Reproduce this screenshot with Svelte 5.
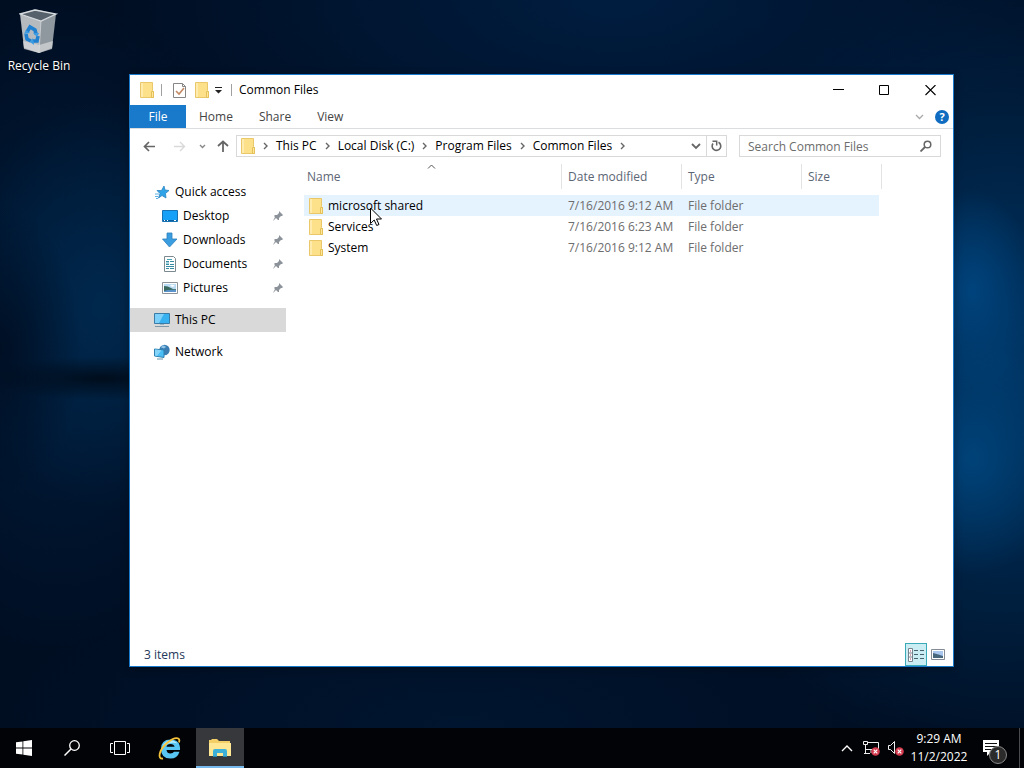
<script lang="ts">
	type Row = { name: string; modified: string; type: string };

	const tabs = ['Home', 'Share', 'View'];
	const crumbs = ['This PC', 'Local Disk (C:)', 'Program Files', 'Common Files'];
	const pinned = ['Desktop', 'Downloads', 'Documents', 'Pictures'];

	const rows: Row[] = [
		{ name: 'microsoft shared', modified: '7/16/2016 9:12 AM', type: 'File folder' },
		{ name: 'Services', modified: '7/16/2016 6:23 AM', type: 'File folder' },
		{ name: 'System', modified: '7/16/2016 9:12 AM', type: 'File folder' }
	];

	let hovered = $state('microsoft shared');
	let search = $state('');
</script>

{#snippet folder()}
	<svg class="folder" width="14" height="16" viewBox="0 0 14 16" aria-hidden="true">
		<path d="M.5.5h12v8l1 1v6H.5z" fill="#fde08a" stroke="#eac768" />
		<path d="M1 1h2v14H1z" fill="#ffebae" />
		<path d="M11.500 9.500v6h2v-6z" fill="#ffe89c" stroke="#e5bf58" />
	</svg>
{/snippet}

{#snippet chevron()}
	<svg class="chevron" width="5" height="8" viewBox="0 0 5 8" aria-hidden="true">
		<path d="M1 1l3 3-3 3" fill="none" stroke="#666" stroke-width="1.400" />
	</svg>
{/snippet}

{#snippet picture()}
	<path d="M.5 2.500h15v11H.5z" fill="#fff" stroke="#8b9298" />
	<path d="M2 4h12v8H2z" fill="#b9dbf4" />
	<path d="M2 6q4 0 7 2t5 1v3H2z" fill="#39695f" />
	<path d="M2 11q6-2 12-1v2H2z" fill="#5b93cc" />
	<path d="M8 5q3-1 5 1l-3 1z" fill="#fff" />
{/snippet}

{#snippet monitor()}
	<path d="M.5 1.500h15v10H.5z" fill="#37b1f0" stroke="#3a7ca5" />
	<path d="M1 2h9L5 11H1z" fill="#7cd0fa" />
	<path d="M6 12h4v1H6z" fill="#9bb4c4" />
	<path d="M1 14.500h14" stroke="#7f98a8" />
{/snippet}

<div class="screen">
	<main class="desktop">
		<button class="shortcut">
			<svg width="40" height="46" viewBox="0 0 40 46" aria-hidden="true">
				<path d="M1 5L16 0l21 5-15 7z" fill="#57616b" />
				<path d="M1 5l21 7v31l-2 1L5 39z" fill="#b5babf" />
				<path d="M22 12l15-7-4 34-13 5z" fill="#8f989f" />
				<path d="M4 32l16 4 14-4-1 8-13 4-15-4z" fill="#d9dadb" opacity=".7" />
				<path d="M1 5L16 1l21 4-15 7z" fill="none" stroke="#d6dbdf" stroke-width="1.300" />
				<path d="M22 12l-2 32" stroke="#dfe2e4" opacity=".6" />
				<g fill="none" stroke="#2080d0" stroke-width="3.600">
					<path d="M8 23l3-5 5 3 1 4" />
					<path d="M7 25l1 5 4 2" />
					<path d="M13 32l5 0 1-5" />
				</g>
				<path d="M14 24l6 0-2 4zM5 25l6-1-4-3zM14 29l-3 4 4 3z" fill="#3b9ce4" />
			</svg>
			<span>Recycle Bin</span>
		</button>

		<section class="window" aria-label="Common Files">
			<header class="titlebar">
				{@render folder()}
				<span class="divider"></span>
				<button class="quick" aria-label="Properties">
					<svg width="14" height="16" viewBox="0 0 14 16">
						<path d="M.5 1.500h9l3 3v11H.5z" fill="#fff" stroke="#868686" />
						<path d="M9.500 1.500v3h3" fill="none" stroke="#868686" />
						<path d="M3 9l3 3 5-6" fill="none" stroke="#c48a63" stroke-width="1.600" />
					</svg>
				</button>
				<button class="quick" aria-label="New folder">{@render folder()}</button>
				<button class="customize" aria-label="Customize Quick Access Toolbar">
					<svg width="7" height="7" viewBox="0 0 7 7">
						<path d="M0 0h7v1H0zM0 3h7L3.500 6.500z" fill="#222" />
					</svg>
				</button>
				<span class="divider"></span>
				<h1>Common Files</h1>
				<div class="controls">
					<button aria-label="Minimize">
						<svg width="11" height="11" viewBox="0 0 11 11"><path d="M0 4.500h11" stroke="#000" /></svg>
					</button>
					<button aria-label="Maximize">
						<svg width="11" height="11" viewBox="0 0 11 11"><path d="M.5.5h9v9h-9z" fill="none" stroke="#000" /></svg>
					</button>
					<button aria-label="Close">
						<svg width="11" height="11" viewBox="0 0 11 11"><path d="M.5 0l10 10m0-10l-10 10" stroke="#000" stroke-width="1.100" /></svg>
					</button>
				</div>
			</header>

			<nav class="ribbon" aria-label="Ribbon">
				<button class="file">File</button>
				{#each tabs as tab}
					<button class="tab">{tab}</button>
				{/each}
				<button class="expand" aria-label="Expand the Ribbon">
					<svg width="9" height="6" viewBox="0 0 9 6"><path d="M1 1l3.500 3.500L8 1" fill="none" stroke="#a9a9a9" stroke-width="1.300" /></svg>
				</button>
				<button class="help" aria-label="Help">?</button>
			</nav>

			<div class="navbar">
				<button class="arrow" aria-label="Back">
					<svg width="13" height="11" viewBox="0 0 13 11"><path d="M6 1L1.500 5.500 6 10M2 5.500h10" fill="none" stroke="#666" stroke-width="1.700" /></svg>
				</button>
				<button class="arrow" aria-label="Forward" disabled>
					<svg width="13" height="11" viewBox="0 0 13 11"><path d="M7 1l4.500 4.500L7 10M11 5.500H1" fill="none" stroke="#d9d9d9" stroke-width="1.400" /></svg>
				</button>
				<button class="recent" aria-label="Recent locations">
					<svg width="7" height="5" viewBox="0 0 7 5"><path d="M1 1l2.500 2.500L6 1" fill="none" stroke="#888" stroke-width="1.400" /></svg>
				</button>
				<button class="up" aria-label="Up">
					<svg width="12" height="12" viewBox="0 0 12 12"><path d="M1 6l5-4.500L11 6M6 2v10" fill="none" stroke="#666" stroke-width="1.800" /></svg>
				</button>

				<div class="address">
					{@render folder()}
					<ol>
						{#each crumbs as crumb}
							<li>{@render chevron()}<button>{crumb}</button></li>
						{/each}
						<li>{@render chevron()}</li>
					</ol>
					<button class="previous" aria-label="Previous locations">
						<svg width="10" height="7" viewBox="0 0 10 7"><path d="M1 1l4 4 4-4" fill="none" stroke="#666" stroke-width="1.800" /></svg>
					</button>
					<button class="refresh" aria-label="Refresh">
						<svg width="12" height="12" viewBox="0 0 12 12">
							<path d="M2 3.500A4.300 4.300 0 1 0 7.500 2.300" fill="none" stroke="#666" stroke-width="1.600" />
							<path d="M1.500 1.200h4.200v4.200" fill="none" stroke="#666" stroke-width="1.500" />
						</svg>
					</button>
				</div>

				<label class="search">
					<input type="text" aria-label="Search Common Files" placeholder="Search Common Files" bind:value={search} />
					<svg width="12" height="12" viewBox="0 0 12 12" aria-hidden="true">
						<circle cx="7.500" cy="4.500" r="3.300" fill="none" stroke="#666" stroke-width="1.500" />
						<path d="M5 7l-4.500 4.500" stroke="#666" stroke-width="1.800" />
					</svg>
				</label>
			</div>

			<div class="content">
				<nav class="tree" aria-label="Navigation pane">
					<a href="#quick-access">
						<svg width="16" height="16" viewBox="0 0 16 16" aria-hidden="true">
							<path d="M10 2l1 4 4 .5-3.500 3L12 14l-4-2.500L4.500 14 6 9.500 3 6.500h4.500z" fill="#2fa3e8" stroke="#2b85c2" stroke-width=".8" />
							<path d="M1 10h4M1 12.500h3M2 14.500h2" stroke="#5fb0e4" />
						</svg>
						Quick access
					</a>
					{#each pinned as place}
						<a class="child" href="#{place.toLowerCase()}">
							<svg width="16" height="16" viewBox="0 0 16 16" aria-hidden="true">
								{#if place === 'Desktop'}
									<path d="M.5 2.500h15v11H.5z" fill="#16a0f8" stroke="#1873b4" />
									<path d="M1 12.500h14" stroke="#0c5f9e" />
									<path d="M2 12.500h1m2 0h1m6 0h2" stroke="#fff" />
								{:else if place === 'Downloads'}
									<path d="M5 1h5v6h5l-7.500 8L.5 7H5z" fill="#3a9de0" stroke="#2c7fbc" stroke-width=".8" />
								{:else if place === 'Documents'}
									<path d="M2.500.5h9l2 2v13h-11z" fill="#fff" stroke="#7c8a90" />
									<path d="M4 5.500h3M8 5.500h4M4 8.500h3M8 8.500h4M4 10.500h8M4 12.500h3M8 12.500h4" stroke="#378ca2" />
									<path d="M5 3.500h5M4 7h3" stroke="#49a3b8" />
								{:else}
									{@render picture()}
								{/if}
							</svg>
							{place}
							<svg class="pin" width="10" height="10" viewBox="0 0 10 10" aria-hidden="true">
								<path d="M6 0l4 4-1 1H8L6 7v2L5 9 3 7 0 10l2-4-1-1 1-1h2l2-2z" fill="#8c9299" />
							</svg>
						</a>
					{/each}
					<a class="root selected" href="#this-pc">
						<svg width="16" height="16" viewBox="0 0 16 16" aria-hidden="true">{@render monitor()}</svg>
						This PC
					</a>
					<a class="root" href="#network">
						<svg width="16" height="16" viewBox="0 0 16 16" aria-hidden="true">
							<circle cx="10.500" cy="6" r="5.200" fill="#397db3" />
							<path d="M8 1.500q3-.5 4 1.500l-2 1.500-3-1z" fill="#8fc3e5" />
							<path d="M.5 5l9.500 1v7.500L.5 12z" fill="#49bdf5" stroke="#2f80b0" />
							<path d="M1 5.600l6.500 .7L3 12l-2-.4z" fill="#85d5fa" />
							<path d="M3 15h6" stroke="#6793ad" />
						</svg>
						Network
					</a>
				</nav>

				<div class="files">
					<table>
						<colgroup>
							<col class="col-name" />
							<col class="col-date" />
							<col class="col-type" />
							<col class="col-size" />
						</colgroup>
						<thead>
							<tr>
								<th class="sorted" aria-sort="ascending">
									Name
									<svg width="9" height="5" viewBox="0 0 9 5" aria-hidden="true"><path d="M1 4.500L4.500 1 8 4.500" fill="none" stroke="#555" /></svg>
								</th>
								<th>Date modified</th>
								<th>Type</th>
								<th>Size</th>
							</tr>
						</thead>
						<tbody>
							{#each rows as row (row.name)}
								<tr class:hovered={hovered === row.name} onmouseenter={() => (hovered = row.name)}>
									<td class="name"><span>{@render folder()}{row.name}</span></td>
									<td>{row.modified}</td>
									<td>{row.type}</td>
									<td></td>
								</tr>
							{/each}
						</tbody>
					</table>
				</div>
			</div>

			<footer class="status">
				<span>{rows.length} items</span>
				<button class="view active" aria-label="Details view" aria-pressed="true">
					<svg width="16" height="14" viewBox="0 0 16 14">
						<path d="M.5.5h4v13h-4zM.5 5h4M.5 9h4" fill="#fff" stroke="#76818c" />
						<path d="M2 3h1M2 7h1M2 11h1" stroke="#a33f62" />
						<path d="M6 2.500h4m2 0h4M6 6.500h4m2 0h4M6 10.500h4m2 0h4" stroke="#49616c" />
					</svg>
				</button>
				<button class="view" aria-label="Large icons view" aria-pressed="false">
					<svg width="14" height="12" viewBox="0 0 14 12">
						<path d="M.5.5h13v10H.5z" fill="#fff" stroke="#858b94" />
						<path d="M2 2h10v7H2z" fill="#a9c6ee" />
						<path d="M2 4q4 1 10 3v2H2z" fill="#48667c" />
					</svg>
				</button>
			</footer>
		</section>

		<svg class="pointer" width="13" height="20" viewBox="0 0 13 20" aria-hidden="true">
			<path d="M.5 1v15.500l3.700-3.500 2.500 5.500 2.300-1-2.500-5.500H11.500z" fill="#fff" stroke="#000" />
		</svg>
	</main>

	<footer class="taskbar">
		<button aria-label="Start">
			<svg width="16" height="16" viewBox="0 0 16 16"><path d="M0 2.300L6.500 1.400v6.200H0zM7.300 1.300L16 0v7.600H7.300zM0 8.400h6.500v6.200L0 13.700zM7.300 8.400H16V16l-8.700-1.300z" fill="#fff" /></svg>
		</button>
		<button aria-label="Search">
			<svg width="16" height="16" viewBox="0 0 16 16"><circle cx="10.500" cy="5.500" r="4.800" fill="none" stroke="#fff" stroke-width="1.300" /><path d="M7 9L.5 15.500" stroke="#fff" stroke-width="1.500" /></svg>
		</button>
		<button aria-label="Task View">
			<svg width="20" height="16" viewBox="0 0 20 16"><path d="M4.500 1.500h11v13h-11zM3 3.500H.5v9H3M17 3.500h2.500v9H17" fill="none" stroke="#fff" /></svg>
		</button>
		<button class="browser" aria-label="Internet Explorer">
			<svg width="24" height="24" viewBox="0 0 24 24">
				<path d="M22 14H8.500q.5 3.500 4 3.500 2.500 0 3.500-1.800h5.500Q19.500 22.500 12.500 22.500 3 22.500 3 13T12.500 3.500Q22.500 3.500 22 14zM8.500 10.800H16.500Q16 8 12.500 8t-4 2.800z" fill="#58c5f2" />
				<path d="M4.500 11Q6 5 12.500 4.500 17 4.500 19.500 7.500 12 5 4.500 11z" fill="#b5ecff" />
				<path d="M5 22.500C-1 23.500 1 14 9 7S23 1 21 6.500" fill="none" stroke="#f5c33b" stroke-width="1.800" />
			</svg>
		</button>
		<button class="running" aria-label="File Explorer">
			<svg width="22" height="18" viewBox="0 0 22 18">
				<path d="M0 1h2l1-1h5l2 2h11v15H0z" fill="#f4cf68" />
				<path d="M0 4h22v13H0z" fill="#ffe793" />
				<path d="M4 18v-6q0-2 2-2h10q2 0 2 2v6h-4v-4H8v4z" fill="#3cb0d8" />
				<path d="M4 17h4v1H4zM14 17h4v1h-4z" fill="#2a87ad" />
			</svg>
		</button>

		<div class="tray">
			<button class="more" aria-label="Show hidden icons">
				<svg width="12" height="8" viewBox="0 0 12 8"><path d="M1 7l5-5 5 5" fill="none" stroke="#fff" stroke-width="1.400" /></svg>
			</button>
			<button aria-label="Network disconnected">
				<svg width="17" height="16" viewBox="0 0 17 16">
					<path d="M5 2.500h10.500v7H5M.5 1.500h4v3h-4zM2.500 5v8M2.500 9.500H6M1 13.500h6M8 10v3" fill="none" stroke="#eee" />
					<circle cx="12.500" cy="11.500" r="4.300" fill="#d33a4d" />
					<path d="M10.700 9.700l3.600 3.600m0-3.600l-3.600 3.600" stroke="#fff" stroke-width="1.200" />
				</svg>
			</button>
			<button aria-label="Volume unavailable">
				<svg width="17" height="16" viewBox="0 0 17 16">
					<path d="M1.500 5.500h2l4-4v12l-4-4h-2z" fill="none" stroke="#eee" />
					<circle cx="12.500" cy="11.500" r="4.300" fill="#d33a4d" />
					<path d="M10.700 9.700l3.600 3.600m0-3.600l-3.600 3.600" stroke="#fff" stroke-width="1.200" />
				</svg>
			</button>
			<button class="clock"><time>9:29 AM<br />11/2/2022</time></button>
			<button class="notifications" aria-label="1 new notification">
				<svg width="16" height="16" viewBox="0 0 16 16">
					<path d="M0 0h16v12H8l-4 4v-4H0z" fill="#fff" />
					<path d="M2 3.500h12M2 6.500h12M2 9.500h8" stroke="#111" />
				</svg>
				<span class="badge">1</span>
			</button>
			<button class="peek" aria-label="Show desktop"></button>
		</div>
	</footer>
</div>

<style>
	.screen {
		display: flex;
		flex-direction: column;
		height: 100vh;
		font: 12px/16px 'Segoe UI', 'Open Sans', 'Noto Sans', sans-serif;
		color: #000;
		overflow: hidden;
	}

	button {
		display: flex;
		align-items: center;
		justify-content: center;
		padding: 0;
		border: 0;
		background: none;
		color: inherit;
		font: inherit;
	}

	svg {
		flex: none;
		display: block;
	}

	.desktop {
		flex: 1;
		position: relative;
		background:
			radial-gradient(ellipse 12% 3% at 10% 52%, #000d1c, transparent),
			radial-gradient(ellipse 8% 20% at 0% 48%, #000f24, transparent),
			radial-gradient(ellipse 6% 14% at 95% 40%, #00437c, transparent),
			radial-gradient(ellipse 9% 16% at 95% 63%, #004278, transparent),
			radial-gradient(ellipse 14% 28% at 10% 42%, #00284d, transparent),
			radial-gradient(ellipse 20% 45% at 6% 45%, #001c3c, transparent),
			radial-gradient(ellipse 50% 30% at 60% 0%, #001d40, transparent),
			radial-gradient(ellipse 35% 55% at 98% 50%, #003768, transparent),
			radial-gradient(ellipse 45% 25% at 45% 100%, #00152f, transparent),
			#000e22;
	}

	.shortcut {
		flex-direction: column;
		gap: 3px;
		width: 78px;
		padding-top: 9px;
		color: #fff;
		text-shadow: 0 1px 2px #000;
	}

	/* Explorer window */
	.window {
		position: absolute;
		inset: 74px 70px 61px 129px;
		display: flex;
		flex-direction: column;
		border: 1px solid #1979ca;
		background: #fff;
		box-shadow: 0 2px 8px rgba(0, 0, 0, 0.25);
	}

	.titlebar {
		display: flex;
		align-items: center;
		height: 30px;
		padding-left: 10px;
	}

	.divider {
		width: 1px;
		height: 12px;
		margin: 0 7px;
		background: #a0a0a0;
	}

	.quick {
		width: 22px;
	}

	.customize {
		width: 11px;
		height: 22px;
	}

	h1 {
		margin: 0;
		font-size: 12px;
		font-weight: 400;
	}

	.controls {
		display: flex;
		align-self: stretch;
		margin-left: auto;
	}

	.controls button {
		width: 46px;
	}

	.ribbon {
		display: flex;
		height: 23px;
		border-bottom: 1px solid #dcdddf;
		color: #444;
	}

	.file {
		width: 56px;
		background: #1979ca;
		color: #fff;
	}

	.tab {
		padding: 0 13px;
	}

	.expand {
		width: 24px;
		margin-left: auto;
	}

	.help {
		align-self: center;
		width: 14px;
		height: 14px;
		margin: 0 4px;
		border-radius: 50%;
		background: #0f6cc0;
		color: #fff;
		font-size: 11px;
		font-weight: 700;
	}

	.navbar {
		display: flex;
		align-items: center;
		height: 34px;
		padding: 0 12px 0 4px;
	}

	.arrow {
		width: 30px;
		height: 22px;
	}

	.recent {
		width: 16px;
		height: 22px;
	}

	.up {
		width: 26px;
		height: 22px;
	}

	.address {
		flex: 1;
		display: flex;
		align-items: center;
		height: 20px;
		margin-right: 12px;
		padding-left: 4px;
		border: 1px solid #d9d9d9;
	}

	ol {
		display: flex;
		margin: 0;
		padding: 0;
		list-style: none;
	}

	li {
		display: flex;
		align-items: center;
	}

	.chevron {
		margin: 0 8px;
	}

	.previous {
		width: 20px;
		height: 20px;
		margin-left: auto;
	}

	.refresh {
		width: 20px;
		height: 20px;
		border-left: 1px solid #d9d9d9;
	}

	.search {
		display: flex;
		align-items: center;
		width: 200px;
		height: 20px;
		border: 1px solid #d9d9d9;
	}

	.search input {
		flex: 1;
		min-width: 0;
		height: 18px;
		padding: 0 8px;
		border: 0;
		outline: none;
		background: none;
		font: inherit;
	}

	.search input::placeholder {
		color: #6d6d6d;
	}

	.search svg {
		margin-right: 8px;
	}

	.content {
		flex: 1;
		display: flex;
		min-height: 0;
	}

	/* Navigation pane */
	.tree {
		width: 156px;
		padding-top: 17px;
		margin-right: 18px;
	}

	.tree a {
		display: flex;
		align-items: center;
		gap: 5px;
		height: 24px;
		padding: 0 3px 0 24px;
		color: inherit;
		text-decoration: none;
	}

	.tree .child {
		padding-left: 32px;
	}

	.tree .root {
		margin-top: 8px;
	}

	.tree .selected {
		background: #d9d9d9;
	}

	.pin {
		margin-left: auto;
	}

	/* File list */
	.files {
		flex: 1;
		overflow: auto;
	}

	table {
		table-layout: fixed;
		width: 578px;
		border-collapse: collapse;
	}

	.col-name {
		width: 258px;
	}

	.col-date,
	.col-type {
		width: 120px;
	}

	.col-size {
		width: 80px;
	}

	th,
	td {
		padding: 0 0 0 6px;
		text-align: left;
		font-weight: 400;
	}

	th {
		position: relative;
		height: 32px;
		padding-bottom: 4px;
		box-sizing: border-box;
		color: #5c6675;
	}

	th:first-child,
	td:first-child {
		padding-left: 3px;
	}

	th::after {
		content: '';
		position: absolute;
		top: 1px;
		right: 0;
		width: 1px;
		height: 25px;
		background: #e3e3e3;
	}

	.sorted svg {
		position: absolute;
		top: 1px;
		left: calc(50% - 6px);
	}

	td {
		height: 21px;
		color: #6d6d6d;
	}

	td:last-child {
		border-right: 6px solid transparent;
		background-clip: padding-box;
	}

	.hovered td {
		background-color: #e5f3ff;
	}

	td.name {
		color: #000;
	}

	.name span {
		display: flex;
		align-items: center;
		gap: 5px;
		padding-left: 2px;
	}

	.status {
		display: flex;
		align-items: center;
		height: 23px;
		padding: 0 4px 0 14px;
		color: #1e395b;
	}

	.status span {
		flex: 1;
	}

	.view {
		width: 22px;
		height: 23px;
		box-sizing: border-box;
	}

	.view.active {
		border: 1px solid #3aa9b8;
		background: #c9edf3;
	}

	.pointer {
		position: absolute;
		top: 207px;
		left: 370px;
		pointer-events: none;
	}

	/* Taskbar */
	.taskbar {
		display: flex;
		height: 40px;
		background: #020306;
		color: #fff;
	}

	.taskbar > button {
		width: 48px;
	}

	.taskbar > .browser {
		width: 52px;
	}

	.taskbar > .running {
		box-sizing: border-box;
		border-top: 2px solid #37383c;
		border-bottom: 2px solid #76b9ed;
		background: #37383c;
	}

	.tray {
		display: flex;
		margin-left: auto;
	}

	.tray button {
		width: 24px;
	}

	.tray .clock {
		width: 64px;
		line-height: 18px;
		text-align: center;
	}

	.tray .notifications {
		position: relative;
		width: 40px;
		margin-right: 8px;
	}

	.badge {
		position: absolute;
		top: 18px;
		left: 18px;
		width: 16px;
		height: 16px;
		border: 1px solid #888;
		border-radius: 50%;
		background: #2b2b2b;
	}

	.tray .peek {
		width: 5px;
		border-left: 1px solid #4a4b4e;
	}
</style>
